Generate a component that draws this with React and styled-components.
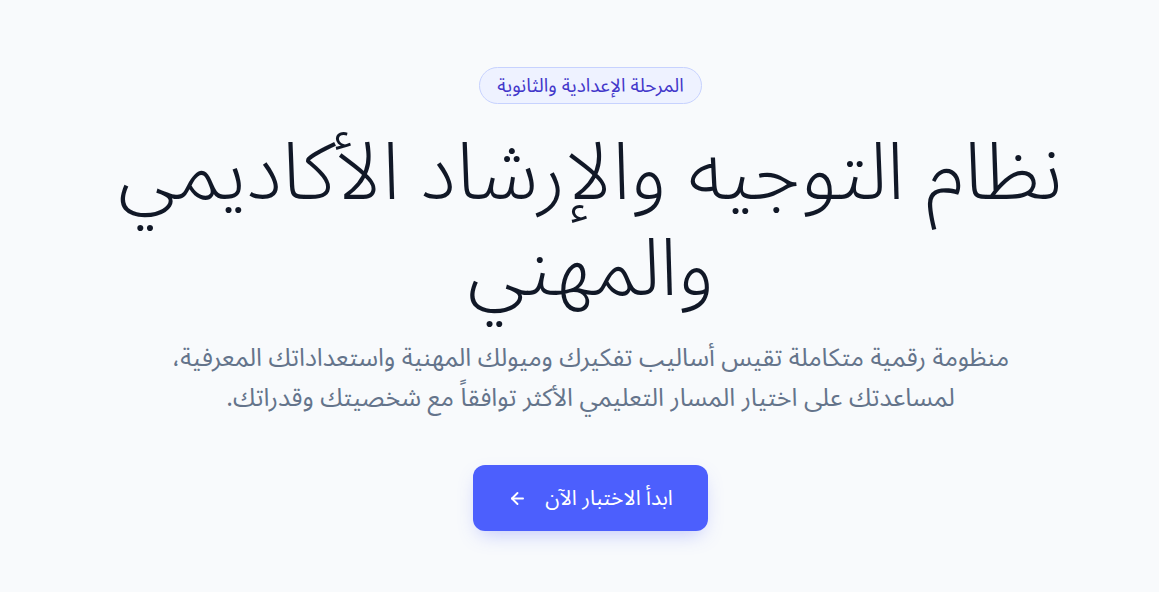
import React from "react";
import styled, { createGlobalStyle } from "styled-components";
import { ArrowLeft } from "lucide-react";

const GlobalStyle = createGlobalStyle`
  html, body {
    margin: 0;
    padding: 0;
    background: #f8fafc;
  }
  body {
    font-family: "Noto Sans Arabic", "DejaVu Sans", "Noto Sans", sans-serif;
  }
`;

function App() {
  return (
    <>
      <GlobalStyle />
      <Hero dir="rtl">
        <Badge>المرحلة الإعدادية والثانوية</Badge>
        <Title>
          نظام التوجيه والإرشاد الأكاديمي
          <br />
          والمهني
        </Title>
        <Lead>
          منظومة رقمية متكاملة تقيس أساليب تفكيرك وميولك المهنية واستعداداتك المعرفية،
          <br />
          لمساعدتك على اختيار المسار التعليمي الأكثر توافقاً مع شخصيتك وقدراتك.
        </Lead>
        <StartButton>
          ابدأ الاختبار الآن
          <ArrowLeft size={19} strokeWidth={2.4} />
        </StartButton>
      </Hero>
    </>
  );
}

export default App;

const Hero = styled.section`
  min-height: 592px;
  box-sizing: border-box;
  padding: 67px 0 0 22px;
  display: flex;
  flex-direction: column;
  align-items: center;
  text-align: center;
  color: #0f172a;
`;

const Badge = styled.div`
  box-sizing: border-box;
  height: 37px;
  padding: 0 17px;
  display: flex;
  align-items: center;
  border-radius: 999px;
  border: 1px solid #c7d2fe;
  background: #eef2ff;
  color: #4338ca;
  font-size: 19px;
`;

const Title = styled.h1`
  margin: 22px 0 0;
  font-size: 80px;
  font-weight: 300;
  line-height: 96px;
  color: #111827;
  white-space: nowrap;
`;

const Lead = styled.p`
  margin: 20px 0 0;
  font-size: 25px;
  line-height: 40px;
  color: #64748b;
  white-space: nowrap;
`;

const StartButton = styled.button`
  margin-top: 47px;
  width: 235px;
  height: 66px;
  border: none;
  border-radius: 12px;
  background: #4c5ffd;
  color: #fff;
  font-family: inherit;
  font-size: 21px;
  display: flex;
  align-items: center;
  justify-content: center;
  gap: 18px;
  box-shadow: 0 8px 20px -6px rgba(76, 95, 253, 0.35);
  cursor: pointer;
`;
